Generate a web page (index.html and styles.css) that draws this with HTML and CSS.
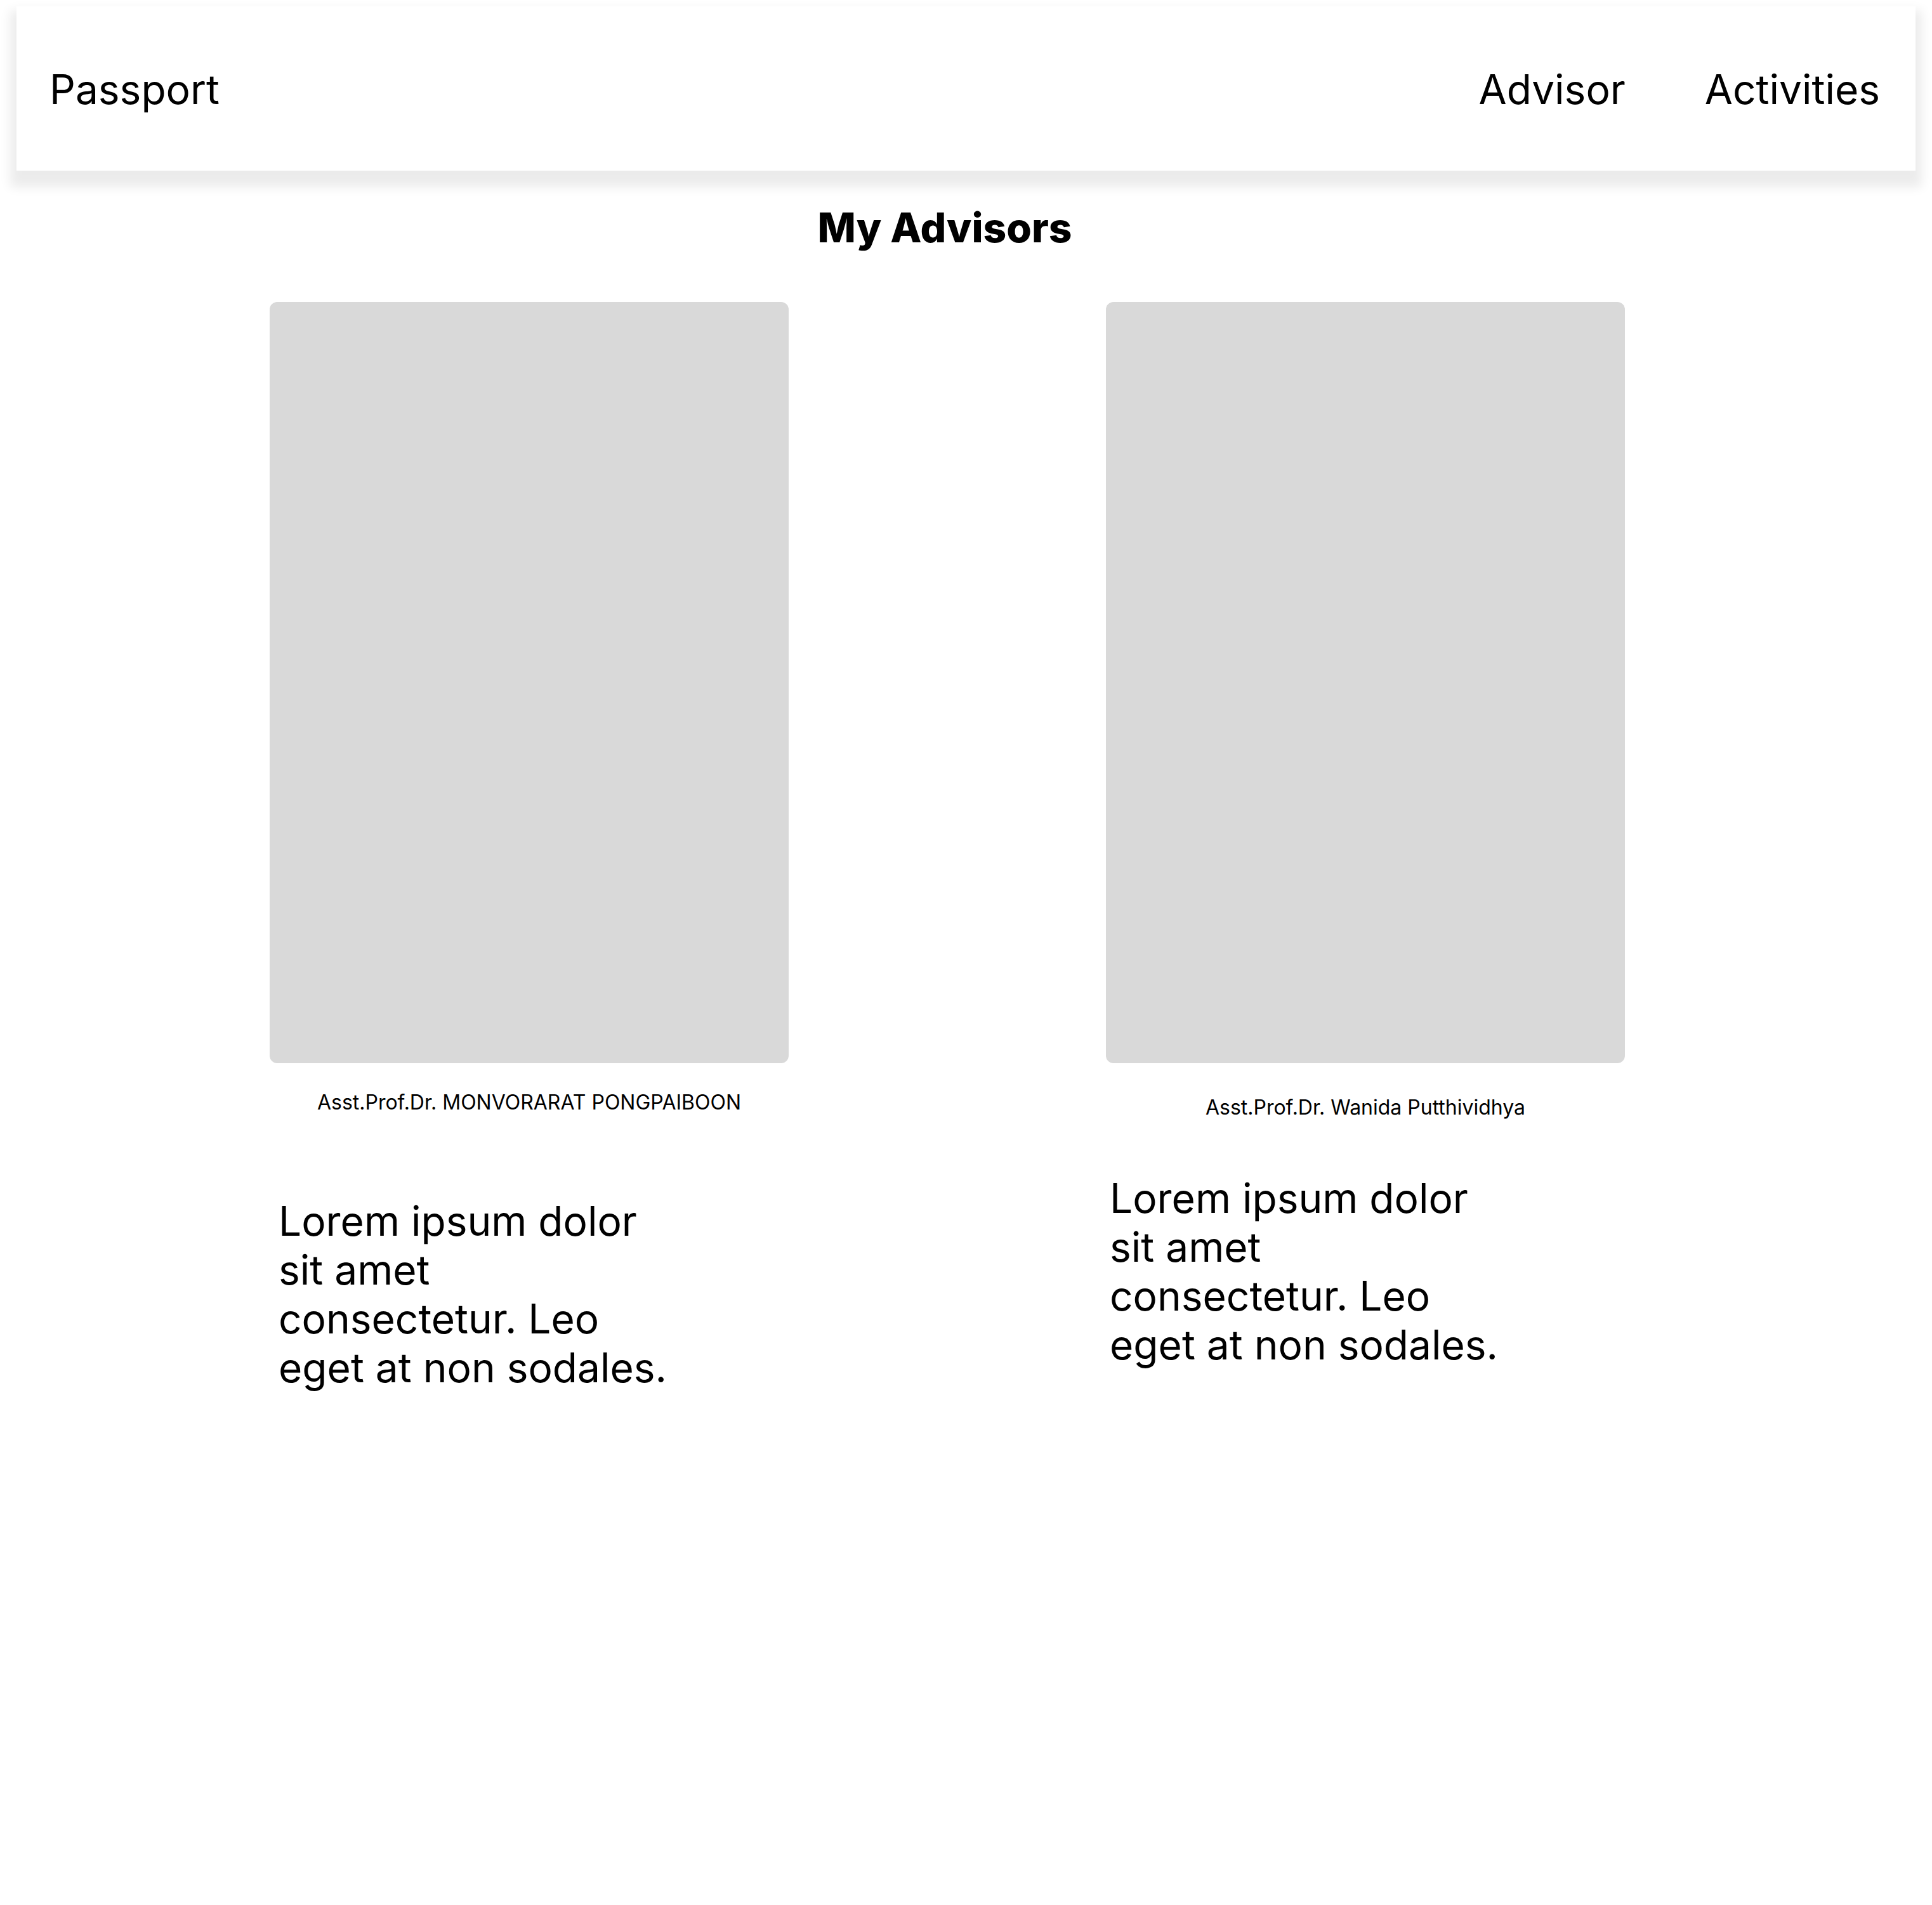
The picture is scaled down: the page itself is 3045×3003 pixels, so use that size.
FILE: index.html
```html
<!DOCTYPE html>
<html lang="en">
<head>
  <meta charset="utf-8">
  <meta name="viewport" content="width=device-width, initial-scale=1">
  <title>My Advisors</title>
  <link rel="stylesheet" href="styles.css">
</head>
<body>
  <header class="topbar">
    <a class="topbar-link" href="#passport">Passport</a>
    <nav class="topbar-nav">
      <a class="topbar-link" href="#advisor">Advisor</a>
      <a class="topbar-link" href="#activities">Activities</a>
    </nav>
  </header>
  <main class="advisors">
    <h1 class="advisors-title">My Advisors</h1>
    <article class="advisor advisor-first">
      <div class="advisor-photo"></div>
      <h2 class="advisor-name">Asst.Prof.Dr. MONVORARAT PONGPAIBOON</h2>
      <p class="advisor-bio">Lorem ipsum dolor sit amet consectetur. Leo eget at non sodales.</p>
    </article>
    <article class="advisor advisor-second">
      <div class="advisor-photo"></div>
      <h2 class="advisor-name">Asst.Prof.Dr. Wanida Putthividhya</h2>
      <p class="advisor-bio">Lorem ipsum dolor sit amet consectetur. Leo eget at non sodales.</p>
    </article>
  </main>
</body>
</html>
```
FILE: styles.css
```css
* {
  box-sizing: border-box;
}

body {
  margin: 0;
  background: #fff;
  color: #000;
  font-family: Inter, "Liberation Sans", sans-serif;
  font-size: 64px;
  line-height: 77px;
}

.topbar {
  display: flex;
  align-items: center;
  justify-content: space-between;
  margin: 10px 26px 0;
  padding: 92px 56px 90px 52px;
  background: #fff;
  box-shadow: 0 16px 16px 10px rgba(0, 0, 0, 0.08);
}

.topbar-nav {
  display: flex;
  gap: 125px;
}

.topbar-link {
  color: inherit;
  text-decoration: none;
}

.advisors {
  display: grid;
  grid-template-columns: 425fr 818fr 500fr 818fr 484fr;
  padding-top: 51px;
}

.advisors-title {
  grid-column: 2 / 5;
  margin: 0 8px 79px 0;
  font-size: 64px;
  font-weight: 800;
  text-align: center;
}

.advisor-first {
  grid-column: 2;
}

.advisor-second {
  grid-column: 4;
}

.advisor-photo {
  aspect-ratio: 818 / 1200;
  border-radius: 12px;
  background: #d9d9d9;
}

.advisor-name {
  margin: 42px 0 129px;
  font-size: 32px;
  font-weight: 400;
  line-height: 39px;
  text-align: center;
}

.advisor-bio {
  max-width: 624px;
  margin: 0 0 0 14px;
}

.advisor-second .advisor-name {
  margin: 50px 0 85px;
}

.advisor-second .advisor-bio {
  margin-left: 6px;
}
```
